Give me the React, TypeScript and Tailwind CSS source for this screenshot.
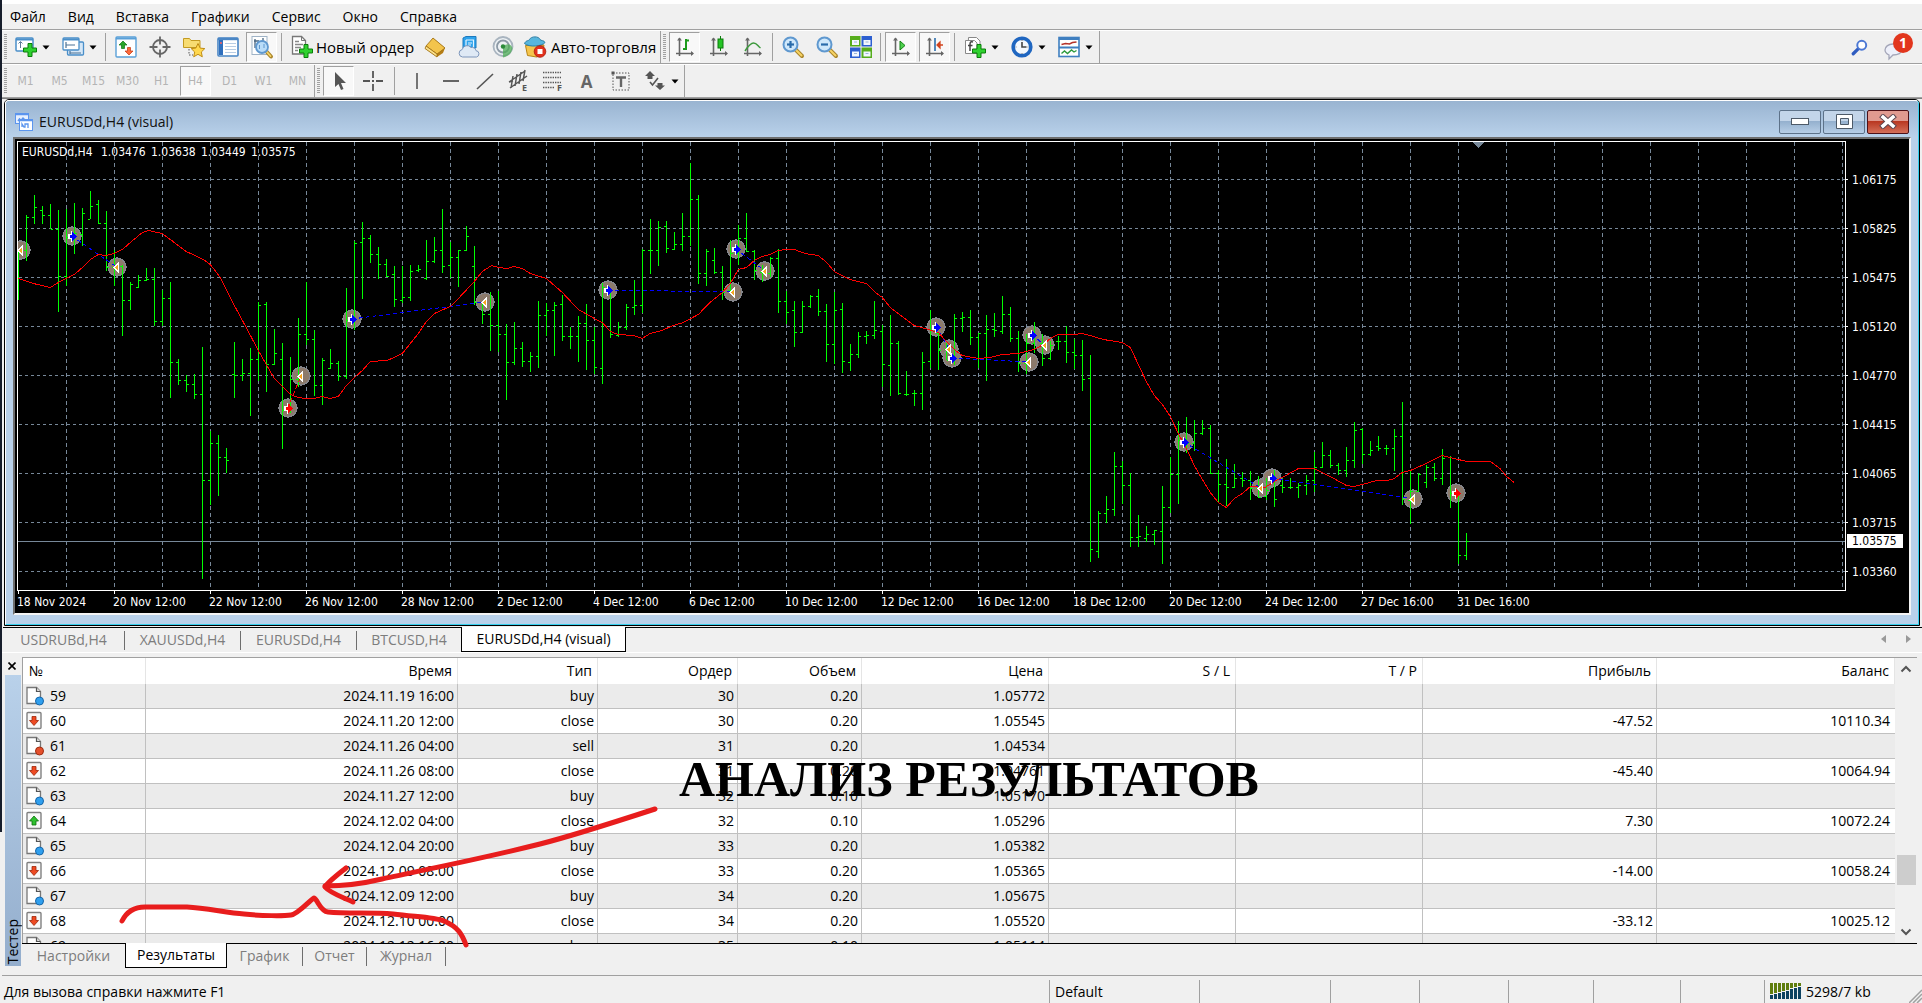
import { useState } from "react";
import type { ReactNode } from "react";
import clsx from "clsx";

type Bar = [number, number, number, number]; // high, low, open, close
type Point = [number, number];
type Kind = "buy" | "sell" | "close";

const BAR_STEP = 8;
const toY = (v: number) => Math.round(v / 3) - 12;
const toX = (v: number) => v / 3 - 18;

const bars: Bar[] = [
    [360, 510, 360, 360], [255, 392, 360, 262], [195, 282, 262, 232], [228, 281, 240, 254], [222, 298, 256, 296],
    [240, 545, 296, 437], [238, 467, 437, 320], [219, 372, 318, 310], [234, 347, 312, 250], [183, 268, 268, 227],
    [210, 283, 223, 280], [243, 423, 280, 412], [360, 467, 412, 408], [405, 617, 408, 511], [457, 540, 511, 463],
    [435, 473, 471, 451], [414, 452, 451, 448], [414, 588, 448, 574], [480, 588, 574, 505], [457, 803, 505, 697],
    [687, 765, 697, 751], [736, 785, 751, 763], [732, 806, 763, 793], [651, 1346, 793, 1051], [903, 1124, 1051, 940],
    [915, 1098, 940, 982], [954, 1029, 982, 991], [637, 803, 733, 736], [688, 752, 736, 730], [655, 857, 730, 688],
    [516, 752, 688, 525], [516, 785, 522, 703], [598, 706, 703, 670], [639, 956, 688, 840], [682, 850, 840, 748],
    [564, 770, 748, 613], [457, 645, 613, 628], [600, 797, 628, 766], [684, 824, 766, 690], [657, 718, 715, 700],
    [693, 752, 700, 739], [474, 746, 739, 570], [333, 600, 570, 340], [277, 507, 337, 325], [315, 398, 325, 371],
    [351, 446, 373, 403], [388, 440, 403, 437], [408, 530, 433, 508], [408, 518, 511, 502], [405, 512, 502, 424],
    [405, 426, 420, 417], [330, 449, 445, 394], [321, 400, 394, 361], [237, 428, 361, 408], [336, 443, 406, 382],
    [360, 470, 382, 361], [288, 362, 361, 319], [348, 526, 408, 516], [517, 581, 517, 553], [486, 662, 553, 586],
    [484, 666, 586, 611], [582, 809, 611, 697], [576, 706, 697, 655], [636, 711, 655, 694], [666, 725, 694, 679],
    [513, 713, 679, 556], [519, 617, 556, 541], [516, 677, 541, 525], [495, 633, 523, 617], [591, 657, 619, 619],
    [558, 696, 619, 580], [522, 719, 580, 631], [591, 731, 631, 712], [459, 762, 715, 470], [486, 623, 486, 612],
    [576, 620, 616, 592], [522, 599, 592, 532], [450, 554, 532, 526], [357, 548, 526, 361], [267, 432, 361, 361],
    [273, 407, 361, 292], [273, 369, 289, 355], [306, 360, 358, 343], [249, 363, 343, 319], [99, 348, 319, 208],
    [195, 461, 208, 430], [357, 468, 430, 364], [354, 432, 391, 427], [408, 510, 427, 485], [330, 485, 480, 370],
    [285, 405, 370, 325], [249, 366, 325, 364], [360, 449, 364, 420], [405, 456, 425, 430], [381, 440, 430, 385],
    [357, 548, 385, 514], [484, 581, 514, 547], [513, 651, 541, 605], [513, 609, 605, 529], [495, 533, 529, 499],
    [477, 557, 499, 544], [522, 696, 544, 643], [486, 701, 643, 541], [519, 728, 538, 694], [642, 723, 697, 672],
    [606, 684, 672, 619], [603, 641, 619, 616], [513, 627, 616, 601], [585, 771, 604, 703], [555, 798, 706, 640],
    [633, 794, 640, 790], [723, 797, 793, 791], [780, 827, 790, 790], [666, 839, 790, 697], [540, 713, 694, 600],
    [610, 719, 610, 660], [640, 690, 658, 690], [552, 705, 680, 565], [546, 605, 565, 562], [540, 645, 562, 622],
    [609, 713, 622, 610], [555, 752, 610, 598], [549, 620, 598, 601], [498, 611, 604, 553], [531, 636, 553, 625],
    [603, 726, 625, 700], [612, 732, 700, 640], [576, 668, 640, 655], [612, 707, 640, 683], [633, 689, 683, 645],
    [618, 659, 633, 634], [588, 699, 634, 667], [627, 717, 667, 676], [630, 782, 676, 748], [675, 1296, 745, 1258],
    [1143, 1284, 1264, 1150], [1098, 1179, 1150, 1138], [966, 1158, 1138, 1009], [993, 1121, 1009, 1066], [1030, 1251, 1066, 1222],
    [1155, 1251, 1222, 1219], [1188, 1236, 1224, 1213], [1200, 1245, 1213, 1201], [1068, 1302, 1204, 1132], [981, 1149, 1132, 1033],
    [873, 1122, 1033, 930], [861, 969, 930, 940], [870, 963, 940, 910], [870, 915, 910, 895], [885, 1031, 895, 1030],
    [1020, 1116, 1030, 1063], [987, 1128, 1063, 1070], [1002, 1074, 1072, 1045], [1027, 1071, 1045, 1051], [1023, 1110, 1051, 1075],
    [1038, 1104, 1075, 1100], [1045, 1110, 1098, 1080], [1020, 1131, 1050, 1108], [1045, 1090, 1065, 1072], [1045, 1077, 1072, 1072],
    [1058, 1104, 1072, 1066], [1035, 1095, 1066, 1051], [966, 1086, 1051, 1012], [936, 1014, 1012, 976], [960, 1014, 976, 1006],
    [1000, 1034, 1006, 1021], [951, 1041, 1021, 991], [876, 1014, 991, 900], [895, 1001, 898, 973], [933, 978, 973, 961],
    [918, 963, 949, 955], [945, 974, 955, 955], [897, 1023, 955, 919], [816, 1125, 919, 1108], [1023, 1182, 1110, 1084],
    [1030, 1087, 1084, 1033], [1005, 1074, 1057, 1012], [1000, 1052, 1012, 1045], [957, 1064, 1045, 984], [978, 1134, 982, 1090],
    [1084, 1302, 1090, 1276], [1209, 1290, 1276, 1234],
];

const average: Point[] = [
    [55, 445], [100, 460], [151, 470], [175, 457], [223, 432], [247, 412], [271, 387], [295, 371], [319, 374], [343, 370],
    [367, 358], [391, 335], [427, 306], [445, 301], [487, 308], [519, 334], [559, 362], [610, 387], [631, 401], [661, 442],
    [700, 518], [745, 602], [775, 660], [823, 743], [871, 793], [895, 802], [919, 804], [943, 804], [967, 799], [991, 803],
    [1015, 798], [1039, 766], [1063, 742], [1087, 720], [1111, 694], [1160, 690], [1183, 682], [1207, 668], [1231, 638], [1255, 608],
    [1279, 574], [1303, 550], [1351, 527], [1375, 503], [1423, 454], [1447, 424], [1475, 406], [1495, 411], [1520, 415], [1543, 408],
    [1567, 415], [1591, 430], [1639, 445], [1687, 485], [1735, 538], [1783, 563], [1807, 577], [1831, 602], [1855, 611], [1900, 614],
    [1927, 625], [1950, 608], [1985, 600], [2020, 584], [2050, 577], [2095, 553], [2130, 516], [2167, 485], [2191, 458], [2215, 417],
    [2240, 411], [2263, 390], [2287, 377], [2311, 372], [2335, 361], [2359, 358], [2383, 358], [2415, 369], [2455, 376], [2480, 395],
    [2503, 422], [2527, 436], [2551, 447], [2599, 460], [2623, 484], [2647, 500], [2671, 530], [2695, 550], [2719, 567], [2743, 586],
    [2775, 595], [2815, 607], [2839, 632], [2863, 658], [2887, 676], [2935, 684], [2970, 680], [3007, 673], [3055, 669], [3103, 658],
    [3130, 643], [3151, 625], [3175, 611], [3223, 613], [3247, 610], [3270, 616], [3310, 627], [3367, 635], [3391, 650], [3415, 702],
    [3439, 752], [3463, 795], [3487, 822], [3511, 857], [3535, 908], [3559, 955], [3583, 1005], [3607, 1048], [3631, 1085], [3655, 1116],
    [3679, 1131], [3703, 1105], [3727, 1088], [3751, 1067], [3795, 1070], [3823, 1054], [3847, 1040], [3895, 1014], [3943, 1014], [3991, 1038],
    [4039, 1066], [4063, 1069], [4087, 1062], [4130, 1051], [4163, 1051], [4183, 1043], [4207, 1027], [4231, 1021], [4279, 998], [4327, 975],
    [4375, 988], [4400, 994], [4472, 994], [4500, 1015], [4520, 1037], [4542, 1055],
];

const markers: [number, number, Kind][] = [
    [63, 360, "close"], [215, 318, "buy"], [350, 411, "close"], [863, 834, "sell"], [903, 738, "close"], [1055, 567, "buy"],
    [1455, 517, "close"], [1824, 480, "buy"], [2208, 357, "buy"], [2200, 486, "close"], [2295, 423, "close"], [2808, 591, "buy"],
    [2848, 657, "close"], [2856, 685, "buy"], [3087, 696, "close"], [3095, 615, "buy"], [3135, 645, "close"], [3551, 936, "buy"],
    [3783, 1075, "close"], [3815, 1044, "buy"], [4240, 1107, "close"], [4367, 1090, "sell"],
];

const deals: [number, number, number, number, string][] = [
    [215, 318, 350, 411, "#00f"], [863, 834, 903, 738, "#f00"], [1055, 567, 1455, 517, "#00f"], [1824, 480, 2200, 486, "#00f"],
    [2208, 357, 2295, 423, "#00f"], [2808, 591, 2848, 657, "#00f"], [2856, 685, 3087, 696, "#00f"], [3095, 615, 3135, 645, "#00f"],
    [3551, 936, 3783, 1075, "#00f"], [3815, 1044, 4240, 1107, "#00f"],
];

const prices = ["1.06175", "1.05825", "1.05475", "1.05120", "1.04770", "1.04415", "1.04065", "1.03715", "1.03360"];

const dates = [
    "18 Nov 2024", "20 Nov 12:00", "22 Nov 12:00", "26 Nov 12:00", "28 Nov 12:00", "2 Dec 12:00", "4 Dec 12:00", "6 Dec 12:00",
    "10 Dec 12:00", "12 Dec 12:00", "16 Dec 12:00", "18 Dec 12:00", "20 Dec 12:00", "24 Dec 12:00", "27 Dec 16:00", "31 Dec 16:00",
];

type Row = { id: number; icon: "blue" | "red" | "down" | "up"; cells: string[] };

const rows: Row[] = [
    { id: 59, icon: "blue", cells: ["2024.11.19 16:00", "buy", "30", "0.20", "1.05772", "", "", "", ""] },
    { id: 60, icon: "down", cells: ["2024.11.20 12:00", "close", "30", "0.20", "1.05545", "", "", "-47.52", "10110.34"] },
    { id: 61, icon: "red", cells: ["2024.11.26 04:00", "sell", "31", "0.20", "1.04534", "", "", "", ""] },
    { id: 62, icon: "down", cells: ["2024.11.26 08:00", "close", "31", "0.20", "1.04761", "", "", "-45.40", "10064.94"] },
    { id: 63, icon: "blue", cells: ["2024.11.27 12:00", "buy", "32", "0.10", "1.05170", "", "", "", ""] },
    { id: 64, icon: "up", cells: ["2024.12.02 04:00", "close", "32", "0.10", "1.05296", "", "", "7.30", "10072.24"] },
    { id: 65, icon: "blue", cells: ["2024.12.04 20:00", "buy", "33", "0.20", "1.05382", "", "", "", ""] },
    { id: 66, icon: "down", cells: ["2024.12.09 08:00", "close", "33", "0.20", "1.05365", "", "", "-14.00", "10058.24"] },
    { id: 67, icon: "blue", cells: ["2024.12.09 12:00", "buy", "34", "0.20", "1.05675", "", "", "", ""] },
    { id: 68, icon: "down", cells: ["2024.12.10 00:00", "close", "34", "0.20", "1.05520", "", "", "-33.12", "10025.12"] },
    { id: 69, icon: "blue", cells: ["2024.12.12 16:00", "buy", "35", "0.10", "1.05114", "", "", "", ""] },
];

const columns = [
    { title: "Время", width: "w-[312px]" },
    { title: "Тип", width: "w-[140px]" },
    { title: "Ордер", width: "w-[140px]" },
    { title: "Объем", width: "w-[124px]" },
    { title: "Цена", width: "w-[187px]" },
    { title: "S / L", width: "w-[187px]" },
    { title: "T / P", width: "w-[187px]" },
    { title: "Прибыль", width: "w-[234px]" },
    { title: "Баланс", width: "w-[238px]" },
];

const Icon = ({ children }: { children: ReactNode }) => (
    <svg width="22" height="22" viewBox="0 0 22 22" fill="none" className="shrink-0 overflow-visible">{children}</svg>
);

const Plus = ({ x, y }: { x: number; y: number }) => (
    <path transform={`translate(${x} ${y})`} d="M5 0.5h4v4.500h4.500v4H9v4.500H5V9H0.500V5H5z" fill="#2fd12f" stroke="#0a7d0a" />
);

const Lens = ({ minus }: { minus?: boolean }) => (
    <Icon>
        <path d="M13 13l7 7" stroke="#a9852a" strokeWidth="4" strokeLinecap="round" />
        <path d="M13.500 13.500l6 6" stroke="#f7d466" strokeWidth="2" strokeLinecap="round" />
        <circle cx="8.500" cy="8.500" r="7" fill="#cfe8fb" stroke="#5f98cf" strokeWidth="2" />
        <path d="M5 8.500h7" stroke="#2a6cab" strokeWidth="2.200" />
        {!minus && <path d="M8.500 5v7" stroke="#2a6cab" strokeWidth="2.200" />}
    </Icon>
);

const Axes = ({ children }: { children: ReactNode }) => (
    <Icon>
        <path d="M5.500 2v18M2 17.500h17" stroke="#666" strokeWidth="1.600" />
        <path d="M3 4.500L5.500 1.500 8 4.500zM17 15l3 2.500-3 2.500z" fill="#666" />
        {children}
    </Icon>
);

const Caret = () => (
    <svg width="8" height="5" viewBox="0 0 8 5" className="shrink-0"><path d="M0.500 0.500h7L4 4.500z" fill="#000" /></svg>
);

const NewChartIcon = () => (
    <Icon>
        <rect x="1" y="2" width="17" height="13" rx="1" fill="#fff" stroke="#4a8fc9" strokeWidth="1.500" />
        <path d="M1 3.500h17" stroke="#4a8fc9" strokeWidth="2" />
        <path d="M5.500 6v6M3.500 7.500l2-2 2 2" stroke="#5c7a96" />
        <Plus x={8} y={7} />
    </Icon>
);
const ProfilesIcon = () => (
    <Icon>
        <rect x="5.500" y="6" width="16" height="13" rx="1" fill="#d5e7f7" stroke="#4a8fc9" strokeWidth="1.300" />
        <rect x="1" y="2" width="16" height="12" rx="1" fill="#fff" stroke="#4a8fc9" strokeWidth="1.300" />
        <path d="M1 3.500h16" stroke="#4a8fc9" strokeWidth="2" />
        <path d="M4 6v6M4 9h9M8 17h11M8 15v3" stroke="#4d7396" strokeWidth="1.200" />
    </Icon>
);
const MarketIcon = () => (
    <Icon>
        <rect x="1" y="1" width="20" height="20" rx="1" fill="#fff" stroke="#5aa0d8" strokeWidth="1.400" />
        <path d="M1 2.500h20" stroke="#5aa0d8" strokeWidth="2" />
        <path d="M8 5l4 4H9.500V12.500H6.500V9H4z" fill="#2aa52a" stroke="#137413" strokeWidth=".7" />
        <path d="M14 19l-4-4h2.500v-3.500h3V15H18z" fill="#ff6a3a" stroke="#c13510" strokeWidth=".7" />
    </Icon>
);
const TargetIcon = () => (
    <Icon>
        <circle cx="11" cy="11" r="7" stroke="#666" strokeWidth="1.800" />
        <path d="M11 0.500v8M11 13.500v8M0.500 11h8M13.500 11h8" stroke="#666" strokeWidth="1.800" />
    </Icon>
);
const NavigatorIcon = () => (
    <Icon>
        <path d="M0.500 11.500v-9h6l1.500 2h9v7z" fill="#f7dc72" stroke="#c39a22" />
        <path d="M6 13v6h4" stroke="#555" strokeDasharray="1.500 1.500" />
        <path d="M15 7.500l2.200 4.600 4.600.5-3.500 3.400 1 4.800-4.300-2.500-4.300 2.500 1-4.800-3.500-3.400 4.600-.5z" fill="#ffd84f" stroke="#bf8c13" />
    </Icon>
);
const TerminalIcon = () => (
    <Icon>
        <rect x="1" y="2" width="20" height="18" rx="1" fill="#fff" stroke="#4a86c5" strokeWidth="1.600" />
        <path d="M1 3h20" stroke="#4a86c5" strokeWidth="2.400" />
        <rect x="2" y="4" width="4" height="15" fill="#2f6fbd" />
        <path d="M3 7h2" stroke="#ff6060" strokeWidth="1.500" />
        <path d="M8 7.500h11M8 10.500h11M8 13.500h11M8 16.500h11" stroke="#b8cde4" />
    </Icon>
);
const TesterIcon = () => (
    <Icon>
        <rect x="1" y="0.500" width="15" height="18" fill="#fff" stroke="#9fb3c6" />
        <path d="M4 3v9M3 5h5M12 2v6" stroke="#47647f" strokeWidth="1.300" />
        <path d="M15 15l5 5.500" stroke="#a9852a" strokeWidth="4" strokeLinecap="round" />
        <path d="M15.500 15.500l4 4.500" stroke="#f7d466" strokeWidth="1.800" strokeLinecap="round" />
        <circle cx="11" cy="11" r="6" fill="#b9dcf8" stroke="#5f98cf" strokeWidth="1.800" />
        <path d="M8.500 9v4M13 8v4" stroke="#5f98cf" />
    </Icon>
);
const OrderIcon = () => (
    <Icon>
        <path d="M1.500 0.500h9l4 4V18h-13z" fill="#fff" stroke="#777" strokeWidth="1.300" />
        <path d="M10.500 0.500v4h4" stroke="#777" />
        <path d="M4 5.500h4M4 8.500h8M4 11.500h6M4 14.500h3" stroke="#888" strokeWidth="1.300" />
        <Plus x={8} y={8} />
    </Icon>
);
const GoldIcon = () => (
    <Icon>
        <path d="M9 2L21 12l-2 5-6 4L1 12.500z" fill="#b57d15" />
        <path d="M9 2L21 12l-8 6L2 10z" fill="#f3c44c" stroke="#9c6d10" strokeWidth=".8" />
        <path d="M2 10l11 8v3L1 12.500z" fill="#fbe08a" stroke="#9c6d10" strokeWidth=".8" />
    </Icon>
);
const CloudIcon = () => (
    <Icon>
        <path d="M5 2l3-1.500h10V12H5z" fill="#2fa3ec" stroke="#1d79bd" />
        <path d="M8 4h7.500v8H8M8 4v8M10 7h4M10 9h3" stroke="#e4f4ff" strokeWidth="1.200" />
        <path d="M4.500 21a3.800 3.800 0 01-.3-7.500A5 5 0 0113 11.500a4 4 0 015 3.200 3.200 3.200 0 01.5 6.300z" fill="#dfe9f5" stroke="#7c95ba" />
    </Icon>
);
const SignalIcon = () => (
    <Icon>
        <circle cx="11" cy="10.500" r="9.500" stroke="#a9b4bf" strokeWidth="1.800" fill="#eef2f5" />
        <circle cx="11" cy="10.500" r="6" stroke="#8d9aa6" strokeWidth="1.800" />
        <path d="M11 10.500v11c5-.5 9-5 9.500-9.500C19 8 15 7 11 10.500z" fill="#4fae57" opacity=".75" />
        <circle cx="11" cy="10.500" r="2.200" fill="#2c8a3a" />
    </Icon>
);
const AutoIcon = () => (
    <Icon>
        <path d="M1.500 9.500l2 10 9 1.500 6-3 1.500-9z" fill="#f5c54c" stroke="#b78415" />
        <path d="M0.500 7.500C2 4 5 5 5.500 3.500 7 0 15 0 16 3.500c1 1.500 4 .5 5 3-3 4-16 5-20.500 1z" fill="#57b6dd" stroke="#2b7da4" />
        <circle cx="16" cy="15.500" r="5.800" fill="#e2301c" stroke="#a81408" strokeWidth=".8" />
        <rect x="13.500" y="13" width="5" height="5" fill="#fff" />
    </Icon>
);
const TilesIcon = () => (
    <Icon>
        <rect x="0" y="0" width="10.500" height="10.500" fill="#56ad1c" />
        <rect x="11.500" y="0" width="10.500" height="10.500" fill="#2c5fd0" />
        <rect x="0" y="11.500" width="10.500" height="10.500" fill="#2c5fd0" />
        <rect x="11.500" y="11.500" width="10.500" height="10.500" fill="#56ad1c" />
        <path d="M2 4h7v5H2zM13.500 4h7v5h-7zM2 15.500h7v5H2zM13.500 15.500h7v5h-7z" fill="#f2f7ff" />
        <path d="M4 6h3M15.500 6h3M4 17.500h3M15.500 17.500h3" stroke="#9cb5d8" />
    </Icon>
);
const IndicatorIcon = () => (
    <Icon>
        <path d="M4.500 1.500h8l3.500 3.500V15h-12z" fill="#fff" stroke="#888" />
        <path d="M1.500 4.500h9l2.500 2.500V17.500h-11.500z" fill="#fff" stroke="#888" />
        <path d="M9 6c-3-1-3 1-3 3v6M4 9.500h4.500" stroke="#444" strokeWidth="1.500" />
        <Plus x={8} y={8} />
    </Icon>
);
const ClockIcon = () => (
    <Icon>
        <circle cx="11" cy="11" r="8.800" fill="#f3f8fd" stroke="#1f66c0" strokeWidth="3.600" />
        <path d="M11 6v5h4.500" stroke="#444" strokeWidth="1.600" />
        <path d="M11 4v1M11 17v1M4.500 11h1M16.500 11h1" stroke="#777" />
    </Icon>
);
const TemplateIcon = () => (
    <Icon>
        <rect x="1" y="1.500" width="20" height="19" fill="#fff" stroke="#3f7fc0" strokeWidth="1.600" />
        <path d="M1 3h20M1 11.500h20" stroke="#3f7fc0" strokeWidth="2" />
        <path d="M3.500 8.500l4-1 4 .5 3-1.500 4-.5" stroke="#b5332a" strokeWidth="1.400" />
        <path d="M3.500 17.500l3-2.500 3 2.500 4-3.500 2.500 2 2.500-1.500" stroke="#2d9a3c" strokeWidth="1.400" />
    </Icon>
);

const Tool = ({ label, pressed, drop, children }: { label: string; pressed?: boolean; drop?: boolean; children: ReactNode }) => (
    <button
        type="button"
        aria-label={label}
        className={clsx(
            "flex h-[30px] shrink-0 items-center justify-center border",
            drop ? "w-[44px] gap-[5px]" : "w-[31px]",
            pressed ? "border-[#a0a0a0] border-r-white border-b-white bg-[#f8f8f8]" : "border-transparent"
        )}
    >
        {children}
        {drop && <Caret />}
    </button>
);

const Grip = () => <div className="ml-[2px] h-[26px] w-[3px] shrink-0 bg-[repeating-linear-gradient(#a0a0a0_0_1px,#f0f0f0_1px_2px)]" />;
const Sep = ({ wide }: { wide?: boolean }) => (
    <div className={clsx("h-[28px] w-px shrink-0 bg-[#a0a0a0]", wide ? "mx-[3px]" : "mx-px")} />
);

const TopToolbar = () => (
    <div className="flex h-[34px] items-center border-t border-b border-t-white border-b-[#a0a0a0]">
        <div className="flex h-full items-center gap-[3px] border-r border-[#a0a0a0] pr-[5px]">
            <Grip />
            <Tool label="Новый график" drop><NewChartIcon /></Tool>
            <Tool label="Профили" drop><ProfilesIcon /></Tool>
            <Sep />
            <Tool label="Обзор рынка"><MarketIcon /></Tool>
            <Tool label="Окно данных"><TargetIcon /></Tool>
            <Tool label="Навигатор"><NavigatorIcon /></Tool>
            <Tool label="Терминал"><TerminalIcon /></Tool>
            <Tool label="Тестер стратегий" pressed><TesterIcon /></Tool>
            <Sep />
            <button type="button" className="flex w-[130px] items-center gap-[3px] pl-[5px] text-[15px] whitespace-nowrap"><OrderIcon />Новый ордер</button>
            <Tool label="Редактор"><GoldIcon /></Tool>
            <Tool label="Хостинг"><CloudIcon /></Tool>
            <Tool label="Сигналы"><SignalIcon /></Tool>
            <button type="button" className="flex w-[134px] items-center gap-[5px] pl-[3px] text-[15px] whitespace-nowrap"><AutoIcon />Авто-торговля</button>
        </div>
        <div className="flex h-full items-center gap-[3px] border-r border-[#a0a0a0] pr-[2px]">
            <Grip />
            <Tool label="Бары" pressed><Axes><path d="M12 3v11M9 13h3M12 4.500h3" stroke="#1b9a1b" strokeWidth="2" /></Axes></Tool>
            <Tool label="Свечи"><Axes><path d="M12.500 0v15" stroke="#0c7a0c" /><rect x="10" y="3" width="5" height="9" fill="#25c425" stroke="#0c7a0c" /></Axes></Tool>
            <Tool label="Линия"><Axes><path d="M3 15c2-3 5-8 8.500-8s4 3 7 5" stroke="#3d9a3d" strokeWidth="1.500" /></Axes></Tool>
            <Sep />
            <Tool label="Увеличить"><Lens /></Tool>
            <Tool label="Уменьшить"><Lens minus /></Tool>
            <Tool label="Окна"><TilesIcon /></Tool>
            <Sep />
            <Tool label="Автопрокрутка" pressed><Axes><path d="M10 5l5 4.500L10 14z" fill="#4cd14c" stroke="#128012" /></Axes></Tool>
            <Tool label="Сдвиг графика" pressed><Axes><path d="M11 2v13" stroke="#2a6cab" strokeWidth="1.600" /><path d="M19 9h-5M16 6L13 9l3 3z" fill="#d1441f" stroke="#d1441f" strokeWidth="1.300" /></Axes></Tool>
            <Sep />
            <Tool label="Индикаторы" drop><IndicatorIcon /></Tool>
            <Tool label="Периоды" drop><ClockIcon /></Tool>
            <Tool label="Шаблоны" drop><TemplateIcon /></Tool>
        </div>
        <div className="ml-auto flex items-center gap-[15px] pr-[9px]">
            <button type="button" aria-label="Поиск">
                <svg width="17" height="17" viewBox="0 0 19 19" fill="none">
                    <path d="M8 11l-5.500 5.500" stroke="#2f5cc0" strokeWidth="3.600" strokeLinecap="round" />
                    <circle cx="12" cy="7" r="5" fill="#fff" stroke="#4c78d4" strokeWidth="2.200" />
                </svg>
            </button>
            <button type="button" aria-label="Сообщения" className="relative h-[28px] w-[30px]">
                <svg width="30" height="28" viewBox="0 0 30 28" fill="none">
                    <path d="M10 11c-5 0-8 3-8 6s2 4 4 5v4l4-4c5 0 9-2 9-5s-4-6-9-6z" fill="#eef0fa" stroke="#a4a6b8" strokeWidth="1.300" />
                </svg>
                <span className="absolute top-0 right-0 flex size-[20px] items-center justify-center rounded-full bg-[#e2361d] text-[14px] leading-none font-bold text-white">1</span>
            </button>
        </div>
    </div>
);

const frames = ["M1", "M5", "M15", "M30", "H1", "H4", "D1", "W1", "MN"];

const DrawToolbar = () => {
    const [frame, setFrame] = useState("H4");
    return (
        <div className="flex h-[34px] items-center border-t border-b border-t-white border-b-[#a0a0a0]">
            <div className="flex h-full items-center gap-[3px] border-r border-[#a0a0a0] pr-px">
                <Grip />
                {frames.map((f) => (
                    <button
                        key={f}
                        type="button"
                        onClick={() => setFrame(f)}
                        className={clsx(
                            "h-[30px] w-[31px] shrink-0 border font-['DejaVu_Sans_Condensed','DejaVu_Sans',sans-serif] text-[12px] text-[#b4b4b4]",
                            frame == f ? "border-[#a0a0a0] border-r-white border-b-white bg-[#f8f8f8]" : "border-transparent"
                        )}
                    >
                        {f}
                    </button>
                ))}
            </div>
            <div className="flex h-full items-center gap-[3px] border-r border-[#a0a0a0] pr-px">
                <Grip />
                <Tool label="Курсор" pressed><Icon><path d="M7 2v15l3.500-3 2.500 6 2.500-1-2.500-6h5z" fill="#555" /></Icon></Tool>
                <Tool label="Перекрестие"><Icon><path d="M11 1v7M11 14v7M1 11h7M14 11h7" stroke="#555" strokeWidth="1.800" /><path d="M10 11h2" stroke="#555" strokeWidth="2" /></Icon></Tool>
                <Sep wide />
                <Tool label="Вертикальная линия"><Icon><path d="M11 3v16" stroke="#555" strokeWidth="1.600" /></Icon></Tool>
                <Tool label="Горизонтальная линия"><Icon><path d="M3 11h16" stroke="#555" strokeWidth="1.800" /></Icon></Tool>
                <Tool label="Трендовая линия"><Icon><path d="M3 19L19 4" stroke="#555" strokeWidth="1.600" /></Icon></Tool>
                <Tool label="Канал">
                    <Icon>
                        <path d="M1 12L17 1M2 18L19 6M5 6l-2 12M9 4L7 16M13 2l-2 12M17 0l-2 11M1 12l4-1" stroke="#555" strokeWidth="1.500" />
                        <text x="14" y="21" fontSize="9" fontWeight="bold" fill="#555">E</text>
                    </Icon>
                </Tool>
                <Tool label="Фибоначчи">
                    <Icon>
                        <path d="M1 2.500h18M1 7.500h18M1 12.500h18M1 17.500h12" stroke="#555" strokeWidth="1.400" strokeDasharray="1.400 1" />
                        <text x="15" y="21" fontSize="9" fontWeight="bold" fill="#555">F</text>
                    </Icon>
                </Tool>
                <Tool label="Текст"><span className="text-[17px] leading-none font-bold text-[#666]">A</span></Tool>
                <Tool label="Метка">
                    <Icon>
                        <rect x="3" y="3" width="16" height="17" stroke="#555" strokeDasharray="1.500 1.500" />
                        <path d="M1.500 1.500h3v3h-3z" fill="#555" />
                        <path d="M6 7.500h10M11 7.500V17" stroke="#666" strokeWidth="2.400" />
                    </Icon>
                </Tool>
                <Tool label="Стрелки" drop>
                    <Icon>
                        <path d="M6 1l5 5H8.500v3h-5V6H1zM16 20l-5-4.500h2.500v-2.500h5v2.500H21z" fill="#555" />
                        <path d="M6 12l2.500 3L14 8" stroke="#555" strokeWidth="1.600" />
                    </Icon>
                </Tool>
            </div>
        </div>
    );
};

const MarkerArrow = ({ x, y, kind }: { x: number; y: number; kind: Kind }) => (
    <g transform={`translate(${Math.round(x)} ${y})`}>
        {kind == "close" ? (
            <path d="M-3 0.500L1.500 -4v9z" fill="#f5a623" stroke="#fff" strokeWidth="1.100" />
        ) : (
            <>
                <path d="M-3.500 -1.500h2.500v-3l5 5-5 5V2.500h-2.500z" fill="#fff" stroke="#fff" strokeWidth="1" />
                <path d="M-2 -1h2v-3l4.500 4.500L0 5V2h-2z" fill={kind == "buy" ? "#00f" : "#f00"} />
            </>
        )}
    </g>
);

const barPath = bars
    .map(([h, l, o, c], i) => {
        const x = i * BAR_STEP;
        return `M${x + 0.5} ${toY(h)}V${toY(l)}M${x - 2} ${toY(o) + 0.5}H${x}M${x + 1} ${toY(c) + 0.5}H${x + 3}`;
    })
    .join("");

const Plot = () => (
    <svg className="block h-full w-full" shapeRendering="crispEdges">
        {Array.from({ length: 60 }, (_, i) => (
            <line key={i} x1={48 * i + 48.5} x2={48 * i + 48.5} y1="0" y2="447" stroke="#778899" strokeDasharray="4 3" />
        ))}
        {prices.map((p, i) => (
            <line key={p} x1="1" x2="100%" y1={37.5 + 49 * i} y2={37.5 + 49 * i} stroke="#778899" strokeDasharray="3 3" />
        ))}
        <line x1="0" x2="100%" y1="399.5" y2="399.5" stroke="#778899" />
        {markers.map(([x, y]) => (
            <circle key={`${x}-${y}`} cx={Math.round(toX(x))} cy={toY(y)} r="9" fill="#8c7a6b" stroke="#85868c" strokeWidth="1.400" />
        ))}
        <path d={barPath} stroke="#0f0" fill="none" />
        {deals.map(([x1, y1, x2, y2, color]) => (
            <line key={x1} x1={toX(x1)} y1={toY(y1)} x2={toX(x2)} y2={toY(y2)} stroke={color} strokeDasharray="4 3" />
        ))}
        <polyline points={average.map(([x, y]) => `${toX(x)},${toY(y) + 0.5}`).join(" ")} stroke="#f00" fill="none" />
        {markers.map(([x, y, kind]) => <MarkerArrow key={`${x}-${y}`} x={toX(x)} y={toY(y)} kind={kind} />)}
        <path d="M1454 0h13l-6.500 6z" fill="#778899" />
    </svg>
);

const ChartWindow = () => (
    <section className="border-t border-[#808080] bg-[#f0f0f0] px-[2px] pb-px">
        <div className="rounded-t-[5px] border border-black">
            <div className="rounded-t-[4px] border border-t-white border-r-[#35d0ee] border-b-[#35d0ee] border-l-white bg-[#b9d1ea] px-[7px] pb-[9px]">
                <div className="-mx-[7px] flex h-[36px] items-center rounded-t-[3px] bg-linear-to-b from-[#99b4d1] to-[#b9d1ea] px-[9px] pt-[5px]">
                    <svg width="18" height="19" viewBox="0 0 18 19" fill="none">
                        <rect x="0.500" y="1.500" width="13" height="10" fill="#e8f1ff" stroke="#5b95ee" />
                        <path d="M0.500 2.500h13M3 9l1.500-2L6 8.500 8 6l2 2" stroke="#5b95ee" strokeWidth="1.500" />
                        <rect x="4.500" y="7.500" width="13" height="11" fill="#fff" stroke="#5b95ee" />
                        <path d="M4.500 8.500h13M7 15v-3l2 3h1v-3h3v4" stroke="#5b95ee" strokeWidth="1.300" />
                    </svg>
                    <h1 className="ml-[6px] text-[14px] text-[#111]">EURUSDd,H4 (visual)</h1>
                    <div className="ml-auto flex gap-[2px]">
                        <button type="button" aria-label="Свернуть" className="flex h-[24px] w-[42px] items-center justify-center rounded-[2px] border border-[#5d7289] bg-[linear-gradient(#c3d5e9_0_45%,#93afcd_45%,#b7cee6)]">
                            <svg width="18" height="7"><rect x="0.500" y="0.500" width="17" height="6" fill="#fff" stroke="#4d5a68" /></svg>
                        </button>
                        <button type="button" aria-label="Развернуть" className="flex h-[24px] w-[42px] items-center justify-center rounded-[2px] border border-[#5d7289] bg-[linear-gradient(#c3d5e9_0_45%,#93afcd_45%,#b7cee6)]">
                            <svg width="17" height="15" fill="none"><rect x="2.500" y="2.500" width="12" height="10" stroke="#fff" strokeWidth="4" /><path d="M0.500 0.500h16v14h-16zM4.500 4.500h8v6h-8z" stroke="#4d5a68" /></svg>
                        </button>
                        <button type="button" aria-label="Закрыть" className="flex h-[24px] w-[42px] items-center justify-center rounded-[2px] border border-[#4d1118] bg-[linear-gradient(#e09a90_0_45%,#b8351f_45%,#d4705a)]">
                            <svg width="18" height="15" viewBox="0 0 18 15"><path d="M4 3l10 9M14 3L4 12" stroke="#5a4650" strokeWidth="5.500" strokeLinecap="square" /><path d="M4 3l10 9M14 3L4 12" stroke="#fff" strokeWidth="3.500" strokeLinecap="square" /></svg>
                        </button>
                    </div>
                </div>
                <div className="border-2 border-t-[#6e6e6e] border-r-[#f4f4f4] border-b-[#f4f4f4] border-l-[#6e6e6e] bg-black pt-[2px] pl-[2px] font-['DejaVu_Sans_Condensed','DejaVu_Sans',sans-serif] text-[12px] text-white">
                    <div className="flex">
                        <div className="relative h-[450px] min-w-0 flex-1 overflow-hidden border border-white">
                            <Plot />
                            <p className="absolute top-[2px] left-[4px] flex leading-[16px] whitespace-nowrap">
                                <span className="w-[79px]">EURUSDd,H4</span>
                                <span className="w-[50px]">1.03476</span>
                                <span className="w-[50px]">1.03638</span>
                                <span className="w-[50px]">1.03449</span>
                                <span className="w-[50px]">1.03575</span>
                            </p>
                        </div>
                        <div className="relative h-[450px] w-[63px] shrink-0 pt-[14px]">
                            {prices.map((p) => (
                                <div key={p} className="flex h-[49px] items-center gap-[4px]">
                                    <span className="h-px w-[2px] bg-white" />
                                    {p}
                                </div>
                            ))}
                            <span className="absolute top-[393px] left-px h-[14px] w-[56px] bg-white pl-[5px] leading-[14px] text-black">1.03575</span>
                        </div>
                    </div>
                    <div className="flex h-[22px] overflow-hidden">
                        {dates.map((d) => (
                            <div key={d} className="w-[96px] shrink-0 whitespace-nowrap">
                                <div className="ml-px h-[3px] w-px bg-white" />
                                <div className="leading-[16px]">{d}</div>
                            </div>
                        ))}
                    </div>
                </div>
            </div>
        </div>
    </section>
);

const chartTabs = ["USDRUBd,H4", "XAUUSDd,H4", "EURUSDd,H4", "BTCUSD,H4", "EURUSDd,H4 (visual)"];
const testerTabs = ["Настройки", "Результаты", "График", "Отчет", "Журнал"];

const Tabs = ({ items, initial, widths }: { items: string[]; initial: number; widths: string[] }) => {
    const [active, setActive] = useState(initial);
    return (
        <div className="flex min-w-0 flex-1" role="tablist">
            {items.map((t, i) => (
                <button
                    key={t}
                    type="button"
                    role="tab"
                    aria-selected={active == i}
                    onClick={() => setActive(i)}
                    className={clsx(
                        "flex h-[25px] shrink-0 items-center justify-center text-[14px] leading-[20px] whitespace-nowrap",
                        widths[i],
                        active == i ? "border border-t-0 border-black bg-white text-black" : "border-t border-black text-[#7d7d7d]"
                    )}
                >
                    <span className={clsx("flex h-[19px] w-full items-center justify-center", active != i && active != i + 1 && "border-r border-[#6e6e6e]")}>{t}</span>
                </button>
            ))}
            <div className="flex-1 border-t border-black" />
        </div>
    );
};

const RowIcon = ({ icon }: { icon: Row["icon"] }) => {
    if (icon == "blue" || icon == "red") {
        return (
            <svg width="18" height="20" viewBox="0 0 18 20" fill="none" className="shrink-0">
                <path d="M1 1.500h9.500l4 4V17.500H1z" fill="#fff" stroke="#777" strokeWidth="1.300" />
                <path d="M10.500 1.500v4h4" fill="#ddd" stroke="#555" strokeWidth="1.200" />
                <circle cx="13.500" cy="15" r="4" fill={icon == "blue" ? "#2f9fee" : "#e5502c"} stroke={icon == "blue" ? "#1565a8" : "#9c2c10"} />
            </svg>
        );
    }
    return (
        <svg width="18" height="20" viewBox="0 0 18 20" fill="none" className="shrink-0">
            <rect x="1" y="1.500" width="14" height="16" rx="1" fill="#f8f8f8" stroke="#808080" strokeWidth="1.400" />
            {icon == "down"
                ? <path d="M6 5.500h4v4h2.500l-4.500 5-4.500-5H6z" fill="#ee4a22" stroke="#9c2508" strokeWidth=".8" />
                : <path d="M6 14h4v-4h2.500l-4.500-5-4.500 5H6z" fill="#2fc02f" stroke="#0c6e0c" strokeWidth=".8" />}
        </svg>
    );
};

const Tester = () => (
    <section className="flex border-t border-white pt-[4px] pr-[5px]">
        <div className="flex w-[20px] shrink-0 flex-col pb-[2px] pl-[3px]">
            <button type="button" aria-label="Закрыть тестер" className="flex h-[18px] w-[14px] items-center justify-center">
                <svg width="8" height="8"><path d="M0.500 0.500l7 7M7.500 0.500l-7 7" stroke="#000" strokeWidth="1.600" /></svg>
            </button>
            <div className="flex w-[16px] flex-1 items-end bg-linear-to-b from-[#b9d1ea] to-[#94aecd]">
                <span className="rotate-180 pt-[2px] text-[14px] leading-[16px] [writing-mode:vertical-rl]">Тестер</span>
            </div>
        </div>
        <div className="relative min-w-0 flex-1">
            <div className="flex h-[286px] overflow-hidden border-t border-l border-[#a0a0a0]">
                <div className="min-w-0 flex-1">
                    <table className="w-full table-fixed border-separate border-spacing-0 text-[14px] leading-[24px]">
                        <thead>
                            <tr className="h-[26px] bg-white">
                                <th className="w-[123px] border-r border-[#e5e5e5] pl-[6px] text-left font-normal">№</th>
                                {columns.map((c) => (
                                    <th key={c.title} className={clsx("border-r border-[#e5e5e5] pr-[5px] text-right font-normal", c.width)}>{c.title}</th>
                                ))}
                            </tr>
                        </thead>
                        <tbody>
                            {rows.map((r) => (
                                <tr key={r.id} className="h-[25px] odd:bg-[#ebebeb] even:bg-white">
                                    <td className="border-r border-b border-[#c0c0c0] py-0 pl-[3px]">
                                        <span className="flex h-[24px] items-center gap-[6px]"><RowIcon icon={r.icon} />{r.id}</span>
                                    </td>
                                    {r.cells.map((c, i) => (
                                        <td key={i} className={clsx("border-b border-[#c0c0c0] py-0 text-right", i == 8 ? "pr-[5px]" : "border-r pr-[3px]")}>{c}</td>
                                    ))}
                                </tr>
                            ))}
                        </tbody>
                    </table>
                </div>
                <div className="flex w-[22px] shrink-0 flex-col items-center bg-[#f0f0f0] py-[7px]">
                    <svg width="12" height="8" fill="none"><path d="M1.500 6.500L6 2l4.500 4.500" stroke="#555" strokeWidth="2" /></svg>
                    <div className="mt-[182px] h-[30px] w-[19px] bg-[#cdcdcd]" />
                    <svg width="12" height="8" fill="none" className="mt-auto"><path d="M1.500 1.500L6 6l4.500-4.500" stroke="#555" strokeWidth="2" /></svg>
                </div>
            </div>
            <Tabs items={testerTabs} initial={1} widths={["w-[103px]", "w-[102px]", "w-[76px]", "w-[64px]", "w-[79px]"]} />
            <svg width="660" height="300" fill="none" className="pointer-events-none absolute top-0 left-0" stroke="#e81d1d" strokeWidth="5" strokeLinecap="round" strokeLinejoin="round">
                <path d="M633 152C590 166 550 179 518 187C450 204 400 213 360 222C335 228 320 229 303 229" />
                <path d="M324 211C314 219 306 225 303 230C308 236 320 240 331 245" />
                <path d="M100 264C104 256 111 250 123 250H165C185 251 205 256 222 257C240 259 262 259 269 258C276 257 288 243 292 241C296 243 298 254 306 255C325 257 350 255 371 257C395 260 412 260 422 264C436 270 440 277 444 288" />
            </svg>
            <p className="pointer-events-none absolute top-[93px] left-[657px] font-['Liberation_Serif',serif] text-[50px] leading-[58px] font-bold whitespace-nowrap text-black">АНАЛИЗ РЕЗУЛЬТАТОВ</p>
        </div>
    </section>
);

const StatusBar = () => (
    <footer className="mt-[7px] flex h-[28px] border-t border-[#a0a0a0] pt-[4px] text-[14px] leading-[24px]">
        <div className="min-w-0 flex-1 truncate pl-[2px]">Для вызова справки нажмите F1</div>
        <div className="w-[150px] shrink-0 border-l border-[#a0a0a0] pl-[5px]">Default</div>
        <div className="w-[131px] shrink-0 border-l border-[#a0a0a0]" />
        <div className="w-[89px] shrink-0 border-l border-[#a0a0a0]" />
        <div className="w-[89px] shrink-0 border-l border-[#a0a0a0]" />
        <div className="w-[85px] shrink-0 border-l border-[#a0a0a0]" />
        <div className="w-[87px] shrink-0 border-l border-[#a0a0a0]" />
        <div className="w-[84px] shrink-0 border-l border-[#a0a0a0]" />
        <div className="flex w-[158px] shrink-0 items-start border-l border-[#a0a0a0] pl-[5px]">
            <svg width="32" height="17" className="mt-[3px]">
                {[0, 1, 2, 3, 4, 5, 6, 7].map((i) => (
                    <g key={i}>
                        <rect x={i * 4} y="0" width="3" height={11 - Math.round(i * 1.1)} fill="#5f7d0e" />
                        <rect x={i * 4} y={12 - Math.round(i * 1.1)} width="3" height={4 + Math.round(i * 1.1)} fill="#0d4260" />
                    </g>
                ))}
            </svg>
            <span className="ml-[4px]">5298/7 kb</span>
            <svg width="13" height="14" fill="none" className="mt-auto ml-auto"><path d="M0 14L13 1M4 14l9-9M8 14l5-5" stroke="#a0a0a0" strokeWidth="1.500" /></svg>
        </div>
    </footer>
);

const menu = ["Файл", "Вид", "Вставка", "Графики", "Сервис", "Окно", "Справка"];

const App = () => {
    return (
        <div className="flex min-h-screen overflow-hidden bg-[#f0f0f0] font-['Open_Sans','Noto_Sans',sans-serif] text-black">
            <div className="w-[2px] shrink-0 bg-[linear-gradient(#161d2b_0_83%,#f0f0f0_83%)]" />
            <main className="flex min-w-0 flex-1 flex-col">
                <div className="h-1 bg-white" />
                <nav className="flex h-[26px] items-center gap-[22px] border-b border-[#a0a0a0] pl-[8px] text-[14px]">
                    {menu.map((m) => <button key={m} type="button">{m}</button>)}
                </nav>
                <TopToolbar />
                <DrawToolbar />
                <ChartWindow />
                <div className="flex h-[25px] pl-px">
                    <Tabs items={chartTabs} initial={4} widths={["w-[122px]", "w-[116px]", "w-[116px]", "w-[104px]", "w-[165px]"]} />
                    <div className="flex w-[60px] shrink-0 justify-end gap-[20px] border-t border-black pt-[7px] pr-[11px]">
                        <svg width="5" height="8"><path d="M5 0v8L0 4z" fill="#999" /></svg>
                        <svg width="5" height="8"><path d="M0 0v8l5-4z" fill="#999" /></svg>
                    </div>
                </div>
                <Tester />
                <StatusBar />
            </main>
        </div>
    );
};

export default App;
